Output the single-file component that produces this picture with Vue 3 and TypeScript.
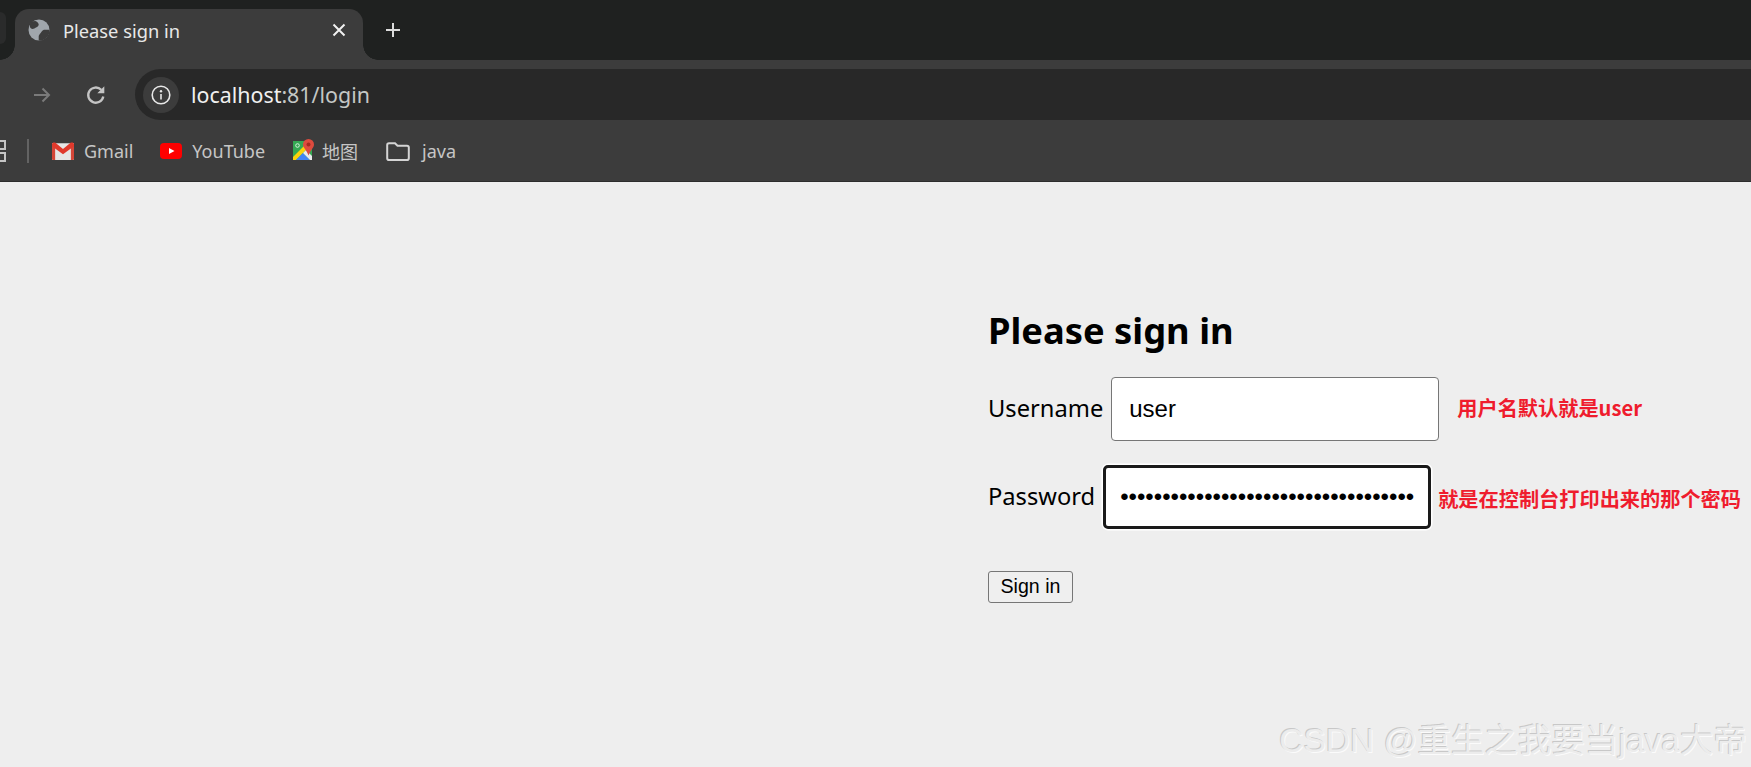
<template>
  <div class="browser">
    <div class="tabstrip">
      <div class="tab-stub"></div>
      <div class="tab">
        <svg class="favicon" viewBox="0 0 22 22">
          <circle cx="11" cy="11" r="10.5" fill="#a0a6ac" />
          <path d="M2.500 3.200C4 2.400 5.700 1.900 7.300 1.900c1.700.6 3 1.700 3.400 3.300.2 1.500-1.200 2.600-2.700 3.400-1.100.7-2.200 1.400-3.400 1.400-1.100 0-2.100-.8-2.700-2-.2-1.700.1-3.300.6-4.800z" fill="#3c3c3c" />
          <path d="M21.500 10.700h-5.500c-1.400.4-2.500 2-3.300 3.300-1 1.200-2 2.200-2 3.400v4.100c2.200.2 4.300-.4 6.100-1.500 2-1.200 3.500-3 4.200-5 .5-1.400.6-3 .5-4.300z" fill="#3c3c3c" />
        </svg>
        <span class="tab-title">Please sign in</span>
        <svg class="tab-close" viewBox="0 0 14 14"><path d="M1.500 1.500l11 11M12.500 1.500l-11 11" /></svg>
      </div>
      <svg class="new-tab" viewBox="0 0 16 16"><path d="M8 1v14M1 8h14" /></svg>
    </div>

    <div class="toolbar">
      <svg class="forward" viewBox="0 0 18 18"><path d="M1 9h15M9.500 2.500L16 9l-6.500 6.500" /></svg>
      <svg class="reload" viewBox="0 0 20 20">
        <path d="M17.300 11.500A7.600 7.600 0 1 1 15.200 4.700" />
        <path class="reload-head" d="M18.300 1.300v7h-7z" />
      </svg>
      <div class="omnibox">
        <span class="site-info">
          <svg viewBox="0 0 20 20">
            <circle cx="10" cy="10" r="8.800" />
            <path d="M10 9v5.500" />
            <circle class="dot" cx="10" cy="6.200" r="1.200" />
          </svg>
        </span>
        <span class="url"><b>localhost</b>:81/login</span>
      </div>
    </div>

    <div class="bookmarks">
      <svg class="apps" viewBox="0 0 6 22">
        <path d="M-6 1h11v8H-6zM-6 13h11v8H-6z" />
      </svg>
      <span class="separator"></span>
      <a v-for="b in bookmarks" :key="b.label" class="bookmark" :class="'bm-' + b.icon">
        <svg v-if="b.icon === 'gmail'" viewBox="0 0 21 17">
          <path d="M0 1h21v15a1 1 0 0 1-1 1H1a1 1 0 0 1-1-1z" fill="#e6e6e6" />
          <path d="M0 2h3v15H1a1 1 0 0 1-1-1zM18 2h3v14a1 1 0 0 1-1 1h-2z" fill="#d44638" />
          <path d="M0 2C0 .6 1.500 0 3 .5l7.500 6 7.500-6C19.500 0 21 .6 21 2v2l-10.500 7.500L0 4z" fill="#e0392c" />
        </svg>
        <svg v-else-if="b.icon === 'youtube'" viewBox="0 0 22 16">
          <rect width="22" height="16" rx="4" fill="#f00" />
          <path d="M9 5l5.500 3L9 11z" fill="#fff" />
        </svg>
        <svg v-else-if="b.icon === 'maps'" viewBox="0 0 22 21">
          <path d="M0 2h19v19H0z" fill="#34a853" />
          <circle cx="4.500" cy="6.500" r="1.800" fill="none" stroke="#d8efdd" stroke-width="1" />
          <path d="M0 18L13 5l3 3L3 21H0z" fill="#fbd20b" />
          <path d="M3 21l7-7 7 7z" fill="#4285f4" />
          <path d="M10 14l3-3 6 6v4h-2z" fill="#e8eaed" />
          <path d="M15.500 0A5.500 5.500 0 0 1 21 5.500c0 3.500-3.800 5.700-5.500 11-1.700-5.300-5.500-7.500-5.500-11A5.500 5.500 0 0 1 15.500 0z" fill="#dd4b3e" />
          <circle cx="15.500" cy="5.500" r="2" fill="#a52a20" />
        </svg>
        <svg v-else class="folder-icon" viewBox="0 0 24 19">
          <path d="M1.200 3A1.800 1.800 0 0 1 3 1.200h6l2.500 2.600H21A1.800 1.800 0 0 1 22.800 5.600v10.600a1.800 1.800 0 0 1-1.800 1.800H3a1.800 1.800 0 0 1-1.800-1.800z" />
        </svg>
        <span>{{ b.label }}</span>
      </a>
    </div>
  </div>

  <main class="page">
    <form class="login" @submit.prevent>
      <h2>Please sign in</h2>
      <p class="row username">
        <label for="username">Username</label>
        <input id="username" class="field" type="text" value="user" />
        <span class="note">用户名默认就是user</span>
      </p>
      <p class="row password">
        <label for="password">Password</label>
        <input id="password" class="field focused" type="password" :value="password" />
        <span class="note">就是在控制台打印出来的那个密码</span>
      </p>
      <button type="submit">Sign in</button>
    </form>
    <div class="watermark">CSDN @重生之我要当java大帝</div>
  </main>
</template>

<script setup lang="ts">
interface Bookmark {
  label: string
  icon: string
}

const bookmarks: Bookmark[] = [
  { label: 'Gmail', icon: 'gmail' },
  { label: 'YouTube', icon: 'youtube' },
  { label: '地图', icon: 'maps' },
  { label: 'java', icon: 'folder' },
]

const password = '•'.repeat(35)
</script>

<style>
html,
body {
  margin: 0;
  height: 100%;
  overflow: hidden;
  background: #eeeeee;
}
</style>

<style scoped>
.browser {
  font-family: "Noto Sans", "Noto Sans CJK SC", sans-serif;
}

.tabstrip {
  height: 60px;
  background: #1f2120;
  display: flex;
  align-items: flex-end;
}

.tab-stub {
  width: 6px;
  height: 32px;
  margin-bottom: 16px;
  background: #2a2b2b;
  border-radius: 0 8px 8px 0;
}

.tab {
  position: relative;
  width: 348px;
  height: 51px;
  margin-left: 9px;
  box-sizing: border-box;
  padding: 0 16px 9px 13px;
  background: #3c3c3c;
  border-radius: 14px 14px 0 0;
  display: flex;
  align-items: center;
}

.tab::before,
.tab::after {
  content: "";
  position: absolute;
  bottom: 0;
  width: 15px;
  height: 15px;
}

.tab::before {
  left: -15px;
  background: radial-gradient(circle at 0 0, transparent 14.5px, #3c3c3c 15px);
}

.tab::after {
  right: -15px;
  background: radial-gradient(circle at 100% 0, transparent 14.5px, #3c3c3c 15px);
}

.favicon {
  width: 22px;
  height: 22px;
  flex: none;
}

.tab-title {
  margin-left: 13px;
  flex: 1;
  font-size: 18.300px;
  color: #e8e8e8;
}

.tab-close {
  width: 14px;
  height: 14px;
  margin-right: 1px;
  fill: none;
  stroke: #f1f1f1;
  stroke-width: 2;
}

.new-tab {
  width: 16px;
  height: 16px;
  margin: 0 0 22px 22px;
  fill: none;
  stroke: #dcdcdc;
  stroke-width: 2;
}

.toolbar {
  height: 60px;
  box-sizing: border-box;
  padding-top: 9px;
  background: #3c3c3c;
  display: flex;
  align-items: center;
}

.forward {
  width: 18px;
  height: 18px;
  margin-left: 33px;
  fill: none;
  stroke: #7a7a7a;
  stroke-width: 2;
}

.reload {
  width: 20px;
  height: 20px;
  margin-left: 35px;
  fill: none;
  stroke: #c4c4c4;
  stroke-width: 2.300;
}

.reload-head {
  fill: #c4c4c4;
  stroke: none;
}

.omnibox {
  flex: 1;
  height: 51px;
  margin-left: 29px;
  padding-left: 8px;
  background: #282828;
  border-radius: 26px 0 0 26px;
  display: flex;
  align-items: center;
}

.site-info {
  width: 36px;
  height: 36px;
  background: #3c3c3c;
  border-radius: 50%;
  display: flex;
  align-items: center;
  justify-content: center;
}

.site-info svg {
  width: 20px;
  height: 20px;
  fill: none;
  stroke: #e8e8e8;
  stroke-width: 1.600;
}

.site-info .dot {
  fill: #e8e8e8;
  stroke: none;
}

.url {
  margin-left: 12px;
  font-size: 21.400px;
  color: #c4c7c5;
}

.url b {
  font-weight: 400;
  color: #f0f0f0;
}

.bookmarks {
  height: 62px;
  box-sizing: border-box;
  padding-top: 1px;
  background: #3c3c3c;
  border-bottom: 1px solid #2c2c2c;
  display: flex;
  align-items: center;
}

.apps {
  width: 6px;
  height: 22px;
  fill: none;
  stroke: #c4c4c4;
  stroke-width: 2;
}

.separator {
  width: 2px;
  height: 24px;
  margin: 0 23px 0 21px;
  background: #636363;
}

.bookmark {
  display: flex;
  align-items: center;
  font-size: 18px;
  color: #c6c6c6;
}

.bookmark span {
  margin-left: 10px;
}

.bm-gmail svg {
  width: 22px;
  height: 18px;
}

.bm-youtube {
  margin-left: 27px;
}

.bm-youtube svg {
  width: 22px;
  height: 16px;
}

.bm-maps {
  margin-left: 28px;
}

.bm-maps span {
  margin-left: 7px;
}

.bm-maps svg {
  width: 22px;
  height: 21px;
  margin-top: -3px;
}

.bm-folder {
  margin-left: 28px;
}

.bm-folder span {
  margin-left: 12px;
}

.folder-icon {
  width: 24px;
  height: 19px;
  fill: none;
  stroke: #d4d4d4;
  stroke-width: 2;
}

.page {
  position: relative;
  height: 585px;
  background: #eeeeee;
  font-family: "Noto Sans", "Noto Sans CJK SC", sans-serif;
  overflow: hidden;
}

.login {
  padding: 123px 0 0 988px;
  color: #000;
}

h2 {
  margin: 0 0 22px;
  font-size: 36.300px;
  line-height: 50px;
  font-weight: 700;
}

.row {
  margin: 0 0 24px;
  display: flex;
  align-items: center;
}

.row.password {
  margin-bottom: 42px;
}

label {
  font-size: 23.700px;
  margin-right: 8px;
  padding-bottom: 2px;
}

.field {
  width: 328px;
  height: 64px;
  box-sizing: border-box;
  padding: 0 17px;
  background: #fff;
  border: 1px solid #767676;
  border-radius: 4px;
  font-family: "Liberation Sans", Arial, sans-serif;
  font-size: 24px;
  color: #000;
  outline: none;
}

.field.focused {
  border: 3px solid #1a1a1a;
  border-radius: 5px;
  box-shadow: 0 0 0 1.500px #fff;
  padding: 0 14px;
}

.note {
  font-family: "Noto Sans CJK SC", sans-serif;
  font-size: 20.200px;
  font-weight: 700;
  color: #ef1c2d;
}

.username .note {
  margin-left: 18px;
  margin-top: -4px;
}

.password .note {
  margin-left: 7px;
  margin-top: 2px;
}

button {
  width: 85px;
  height: 32px;
  padding: 0 0 2px;
  display: block;
  background: #efefef;
  border: 1px solid #767676;
  border-radius: 3px;
  font-family: "Liberation Sans", Arial, sans-serif;
  font-size: 19.600px;
  color: #000;
}

.watermark {
  position: absolute;
  right: 4px;
  bottom: 8px;
  font-family: "Liberation Sans", "Noto Sans CJK SC", sans-serif;
  font-size: 33.500px;
  line-height: 36px;
  white-space: nowrap;
  color: #ececec;
  text-shadow: -1px -1px 0.5px #c8c8c8, 1px 1px 0.5px #fbfbfb;
}
</style>
